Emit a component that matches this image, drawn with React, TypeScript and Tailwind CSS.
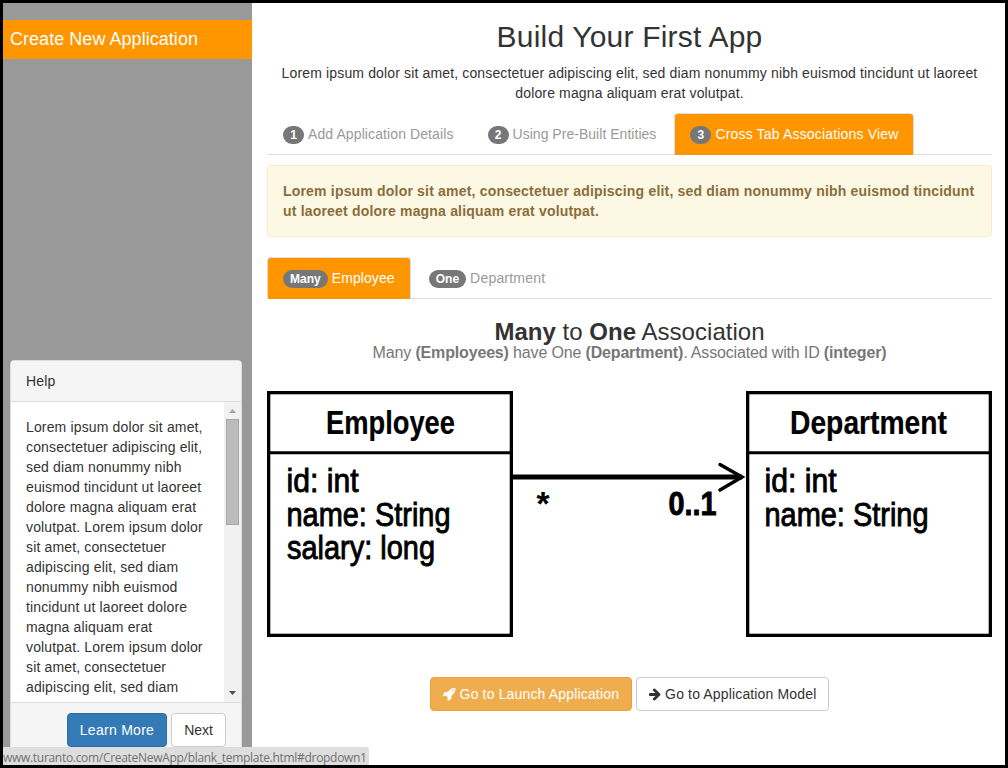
import type { ReactNode } from "react";

const LOREM =
  "Lorem ipsum dolor sit amet, consectetuer adipiscing elit, sed diam nonummy nibh euismod tincidunt ut laoreet dolore magna aliquam erat volutpat.";

function Tab({ badge, active = false, children }: { badge: string; active?: boolean; children: ReactNode }) {
  return (
    <li
      className={
        active
          ? "mr-[2px] -mb-px h-[42px] rounded-t border border-b-0 border-[#ddd] bg-[#ff9600] px-[15px] py-[10px] text-white"
          : "mr-[2px] -mb-px h-[42px] border border-transparent px-[15px] py-[10px] text-[#999]"
      }
    >
      <span className="mr-[4px] inline-block min-w-[21px] rounded-[10px] bg-[#777] px-[7px] py-[3px] text-center align-middle text-[12px] leading-[12px] font-bold tracking-normal text-white">
        {badge}
      </span>
      {children}
    </li>
  );
}

function Tabs({ children }: { children: ReactNode }) {
  return <ul className="flex h-[42px] border-b border-[#ddd] tracking-normal whitespace-nowrap">{children}</ul>;
}

function RocketIcon() {
  return (
    <svg viewBox="64 0 1664 1792" className="h-[14px] w-[13px] fill-current">
      <path d="M1440 448q0-40-28-68t-68-28-68 28-28 68 28 68 68 28 68-28 28-68zm224-288q0 249-75.5 430.5t-253.5 360.5q-81 80-195 176l-20 379q-2 16-16 26l-384 224q-7 4-16 4-12 0-23-9l-64-64q-13-14-8-32l85-276-281-281-276 85q-3 1-9 1-14 0-23-9l-64-64q-17-19-5-39l224-384q10-14 26-16l379-20q96-114 176-195 188-187 358-258t431-71q14 0 24 9.500t10 22.500z" />
    </svg>
  );
}

function ArrowRightIcon() {
  return (
    <svg viewBox="128 0 1536 1792" className="h-[14px] w-[12px] fill-current">
      <path d="M1600 960q0 54-37 91l-651 651q-39 37-91 37-51 0-90-37l-75-75q-38-38-38-91t38-91l293-293h-704q-52 0-84.500-37.500t-32.500-90.500v-128q0-53 32.500-90.500t84.500-37.500h704l-293-294q-38-36-38-90t38-90l75-75q38-38 90-38 53 0 91 38l651 651q37 35 37 90z" />
    </svg>
  );
}

function Label({ x, y, width, bold = false, stroke = 0.9, children }: { x: number; y: number; width: number; bold?: boolean; stroke?: number; children: string }) {
  return (
    <text
      x={x}
      y={y}
      textLength={width}
      lengthAdjust="spacingAndGlyphs"
      fontSize={33}
      fontWeight={bold ? 700 : 400}
      stroke="#000"
      strokeWidth={stroke}
    >
      {children}
    </text>
  );
}

function AssociationDiagram() {
  return (
    <svg
      viewBox="0 0 725 246"
      className="block h-[246px] w-[725px] tracking-normal [font-family:'Liberation_Sans_Narrow','Liberation_Sans',sans-serif]"
    >
      <g fill="none" stroke="#000" strokeWidth={3.3}>
        <rect x={1.65} y={1.65} width={242.7} height={242.7} />
        <rect x={480.65} y={1.65} width={242.7} height={242.7} />
        <path d="M0 61.800H246M479 61.800H725" strokeWidth={3} />
        <path d="M246 86H475" strokeWidth={5} />
        <path d="M453 73.500L475 86L453 99" strokeWidth={3.5} strokeLinecap="round" />
      </g>
      <Label x={59} y={42.500} width={129} bold stroke={0.2}>Employee</Label>
      <Label x={19.500} y={101} width={72}>id: int</Label>
      <Label x={19.500} y={134.500} width={164}>name: String</Label>
      <Label x={20} y={168} width={148}>salary: long</Label>
      <Label x={523} y={42.500} width={157} bold stroke={0.2}>Department</Label>
      <Label x={497.500} y={101} width={72}>id: int</Label>
      <Label x={497.500} y={134.500} width={164}>name: String</Label>
      <Label x={401.500} y={124} width={48} bold>0..1</Label>
      <Label x={269.500} y={124} width={13} bold stroke={0.2}>*</Label>
    </svg>
  );
}

export default function App() {
  return (
    <div className="relative flex h-[768px] w-[1008px] overflow-hidden border-[3px] border-black bg-white text-[14px] leading-[20px] tracking-[0.145px] text-[#333] [font-family:'Liberation_Sans',Arial,sans-serif]">
      <aside className="flex w-[249px] shrink-0 flex-col bg-[#999] pt-[17px]">
        <h2 className="h-[39px] bg-[#ff9600] pl-[7px] text-[18px] leading-[38px] tracking-[0.04px] text-white">Create New Application</h2>
        <section className="mt-[301px] ml-[7px] flex h-[402px] w-[232px] flex-col rounded border border-[#ddd] bg-white">
          <header className="h-[41px] rounded-t-[3px] border-b border-[#ddd] bg-[#f5f5f5] px-[15px] py-[10px]">Help</header>
          <div className="flex h-[300px] overflow-hidden">
            <p className="w-[213px] px-[15px] pt-[15px]">
              {LOREM} {LOREM} Lorem ipsum dolor sit amet, consectetuer adipiscing elit, sed diam
            </p>
            <div className="flex w-[17px] shrink-0 flex-col items-center bg-[#f1f1f1]">
              <svg viewBox="0 0 17 17" className="h-[17px] w-[17px] shrink-0">
                <path d="M5 11L8.500 7L12 11Z" fill="#a3a3a3" />
              </svg>
              <div className="h-[106px] w-[13px] border border-[#a8a8a8] bg-[#bcbcbc]" />
              <svg viewBox="0 0 17 17" className="mt-auto h-[17px] w-[17px] shrink-0">
                <path d="M5 6L8.500 10L12 6Z" fill="#505050" />
              </svg>
            </div>
          </div>
          <footer className="flex grow items-start justify-end gap-[4px] border-t border-[#ddd] bg-[#f5f5f5] px-[15px] pt-[10px]">
            <button className="h-[34px] rounded border border-[#2e6da4] bg-[#337ab7] px-[12px] tracking-[0.28px] text-white">Learn More</button>
            <button className="h-[34px] rounded border border-[#ccc] bg-white px-[12px] tracking-normal">Next</button>
          </footer>
        </section>
      </aside>

      <main className="flex w-[753px] flex-col pt-[17px] pr-[13px] pl-[15px]">
        <h1 className="text-center text-[30px] leading-[33px] tracking-[0.2px]">Build Your First App</h1>
        <p className="mt-[10px] px-[10px] text-center">{LOREM}</p>
        <div className="mt-[10px]">
          <Tabs>
            <Tab badge="1"><span className="tracking-[0.1px]">Add Application Details</span></Tab>
            <Tab badge="2"><span className="tracking-[0.03px]">Using Pre-Built Entities</span></Tab>
            <Tab badge="3" active><span className="tracking-[0.17px]">Cross Tab Associations View</span></Tab>
          </Tabs>
        </div>
        <div className="mt-[10px] w-[725px] rounded border border-[#faebcc] bg-[#fcf8e3] p-[15px] font-bold tracking-[0.19px] text-[#8a6d3b]">
          {LOREM}
        </div>
        <div className="mt-[20px]">
          <Tabs>
            <Tab badge="Many" active><span className="tracking-[0.1px]">Employee</span></Tab>
            <Tab badge="One"><span className="tracking-[0.2px]">Department</span></Tab>
          </Tabs>
        </div>
        <h3 className="mt-[20px] text-center text-[24px] leading-[26px] tracking-[0.03px]">
          <b>Many</b> to <b>One</b> Association
        </h3>
        <p className="-mt-px text-center text-[16px] leading-[18px] tracking-[-0.16px] text-[#777]">
          Many <b>(Employees)</b> have One <b>(Department)</b>. Associated with ID <b>(integer)</b>
        </p>
        <div className="mt-[29px]">
          <AssociationDiagram />
        </div>
        <div className="mt-[40px] flex justify-center gap-[4px]">
          <button className="flex h-[34px] items-center gap-[4px] rounded border border-[#eea236] bg-[#f0ad4e] px-[12px] tracking-[0.16px] whitespace-nowrap text-white">
            <RocketIcon />
            Go to Launch Application
          </button>
          <button className="flex h-[34px] items-center gap-[4px] rounded border border-[#ccc] bg-white px-[12px] tracking-[0.15px] whitespace-nowrap">
            <ArrowRightIcon />
            Go to Application Model
          </button>
        </div>
      </main>

      <div className="absolute bottom-0 left-0 h-[18px] w-[366px] rounded-tr-[3px] bg-[#dedede] text-[12px] leading-[21px] tracking-[-0.3px] whitespace-nowrap text-[#707070] [font-family:'Open_Sans','Noto_Sans',sans-serif]">
        www.turanto.com/CreateNewApp/blank_template.html#dropdown1
      </div>
    </div>
  );
}
